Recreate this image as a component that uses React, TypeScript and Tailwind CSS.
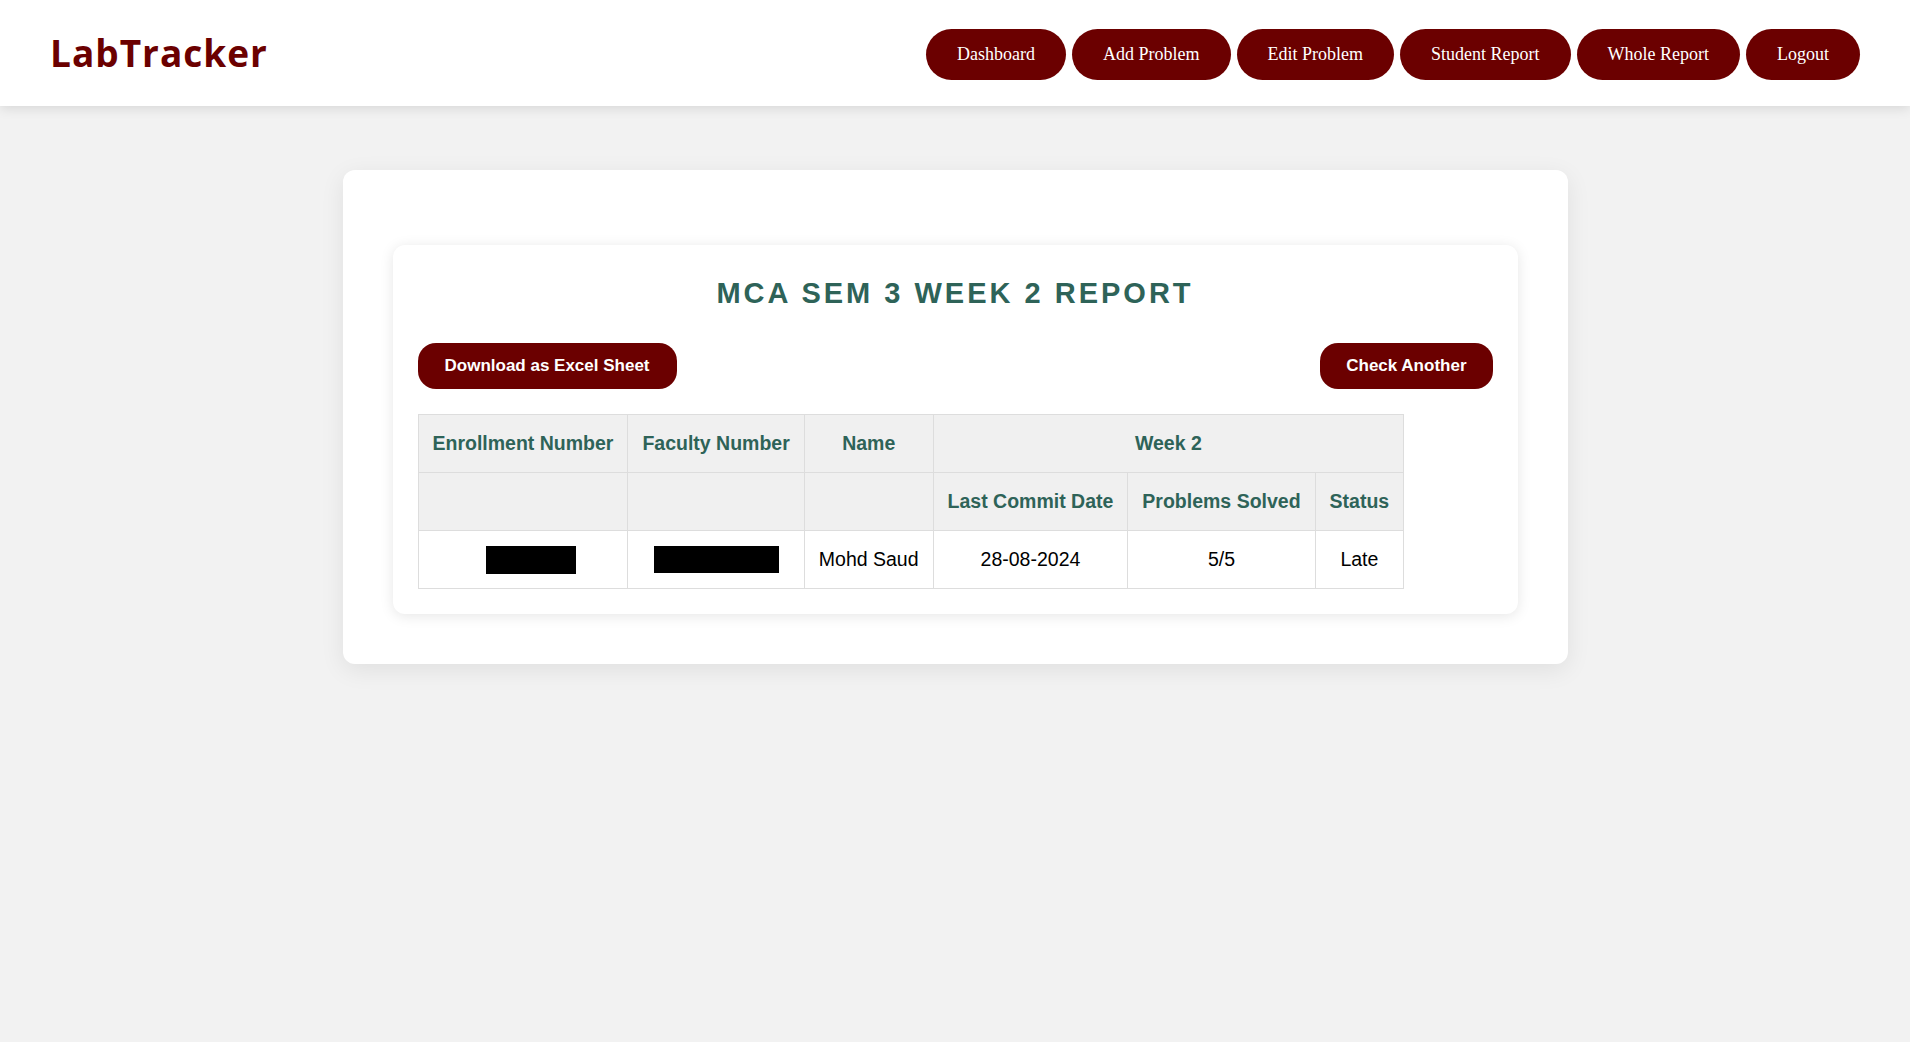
import React from "react";

const navItems = [
  "Dashboard",
  "Add Problem",
  "Edit Problem",
  "Student Report",
  "Whole Report",
  "Logout",
];

const th =
  "border border-[#dddddd] bg-[#f0f0f0] px-[14px] py-[17px] leading-[23px] font-bold text-[#2e6358] text-center";
const td =
  "border border-[#dddddd] bg-white px-[14px] py-[17px] leading-[23px] text-black text-center";
const tdMasked =
  "border border-[#dddddd] bg-white px-[14px] py-[14px] text-center";

const Navbar: React.FC = () => {
  return (
    <header className="h-[106px] bg-white flex items-center justify-between px-[50px] shadow-[0_2px_12px_rgba(0,0,0,0.12)] relative">
      <h1
        className="text-[37px] font-bold tracking-[1px] text-[#6b0000]"
        style={{ fontFamily: "'Open Sans', 'Liberation Sans', sans-serif" }}
      >
        LabTracker
      </h1>
      <nav className="flex gap-[6px] pt-[2px]">
        {navItems.map((item) => (
          <button
            key={item}
            className="h-[51px] px-[31px] rounded-[26px] bg-[#6b0000] text-white text-[18px]"
            style={{ fontFamily: "'Liberation Serif', serif" }}
          >
            {item}
          </button>
        ))}
      </nav>
    </header>
  );
};

const ReportTable: React.FC = () => {
  return (
    <table className="border-collapse text-[19.5px]">
      <thead>
        <tr>
          <th className={th}>Enrollment Number</th>
          <th className={th}>Faculty Number</th>
          <th className={th}>Name</th>
          <th className={th} colSpan={3}>
            Week 2
          </th>
        </tr>
        <tr>
          <th className={th}></th>
          <th className={th}></th>
          <th className={th}></th>
          <th className={th}>Last Commit Date</th>
          <th className={th}>Problems Solved</th>
          <th className={th}>Status</th>
        </tr>
      </thead>
      <tbody>
        <tr>
          <td className={tdMasked}>
            <span className="block w-[90px] h-[28px] bg-black mx-auto translate-x-[8px]" />
          </td>
          <td className={tdMasked}>
            <span className="block w-[125px] h-[27px] bg-black mx-auto" />
          </td>
          <td className={td}>Mohd Saud</td>
          <td className={td}>28-08-2024</td>
          <td className={td}>5/5</td>
          <td className={td}>Late</td>
        </tr>
      </tbody>
    </table>
  );
};

export default function App() {
  return (
    <div
      className="min-h-screen bg-[#f2f2f2]"
      style={{ fontFamily: "'Liberation Sans', Arial, sans-serif" }}
    >
      <Navbar />
      <main className="flex justify-center pt-[64px]">
        <div className="w-[1225px] bg-white rounded-[12px] pt-[75px] px-[50px] pb-[50px] shadow-[0_6px_24px_rgba(0,0,0,0.08)]">
          <div className="bg-white rounded-[12px] p-[25px] shadow-[0_2px_14px_rgba(0,0,0,0.1)]">
            <h2 className="mt-[6px] text-center text-[29px] leading-[35px] font-bold tracking-[3px] text-[#2e6358]">
              MCA SEM 3 WEEK 2 REPORT
            </h2>
            <div className="flex justify-between mt-[32px] mb-[25px]">
              <button className="h-[46px] px-[27px] rounded-[18px] bg-[#6b0000] text-white text-[17px] font-bold">
                Download as Excel Sheet
              </button>
              <button className="h-[46px] px-[26px] rounded-[18px] bg-[#6b0000] text-white text-[17px] font-bold">
                Check Another
              </button>
            </div>
            <ReportTable />
          </div>
        </div>
      </main>
    </div>
  );
}
